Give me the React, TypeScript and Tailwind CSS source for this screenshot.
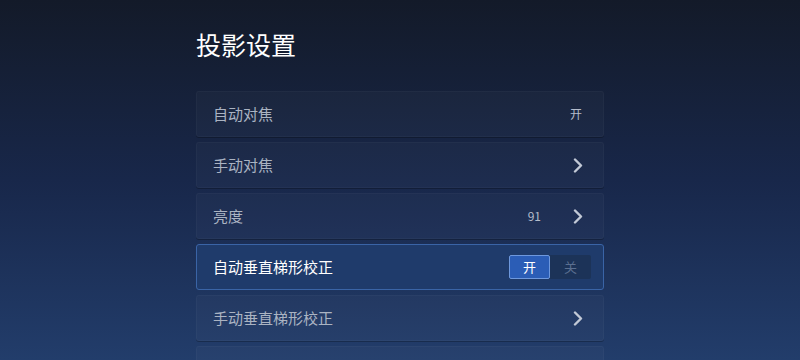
type Row = {
  label: string;
  value?: string;
  arrow?: boolean;
  toggle?: boolean;
};

const rows: Row[] = [
  { label: '自动对焦', value: '开' },
  { label: '手动对焦', arrow: true },
  { label: '亮度', value: '91', arrow: true },
  { label: '自动垂直梯形校正', toggle: true },
  { label: '手动垂直梯形校正', arrow: true },
  { label: '' },
];

const Chevron = () => (
  <svg width="10" height="15" viewBox="0 0 10 15" className="text-[#c2c9d6]">
    <polyline points="2,1.5 8,7.5 2,13.5" fill="none" stroke="currentColor" strokeWidth="2.4" strokeLinecap="round" strokeLinejoin="round" />
  </svg>
);

const App = () => {
  return (
    <div
      className="h-[360px] w-[800px] overflow-hidden bg-gradient-to-b from-[#131a29] via-[#18274a] to-[#223d6b]"
      style={{ fontFamily: '"Noto Sans CJK SC", "Noto Sans", sans-serif' }}
    >
      <div className="mx-auto w-[408px] pt-[28px]">
        <h1 className="text-[25px] leading-8 font-normal text-white">投影设置</h1>

        <div className="mt-[31px] flex flex-col gap-[5px]">
          {rows.map((row, i) =>
            row.toggle ? (
              <div
                key={i}
                className="flex h-[46px] items-center justify-between rounded-[3px] border border-[#3a64a6] bg-[#1f3b6b] pl-4 pr-[12px]"
              >
                <span className="text-[15px] text-white">{row.label}</span>
                <div className="flex items-center rounded-[2px] bg-[#1c3358]">
                  <div className="flex h-[24px] w-[41px] items-center justify-center rounded-[2px] border border-[#6e98dd] bg-[#2b5db6] text-[13px] text-white">
                    开
                  </div>
                  <div className="flex h-[22px] w-[41px] items-center justify-center text-[13px] text-[#5b6f90]">
                    关
                  </div>
                </div>
              </div>
            ) : (
              <div
                key={i}
                className="flex h-[46px] items-center justify-between rounded-[3px] border border-white/[0.03] bg-white/[0.025] pl-4 pr-[20px] shadow-[0_1px_0_rgba(0,0,0,0.25)]"
              >
                <span className="text-[15px] text-[#aab3c2]">{row.label}</span>
                <div className="flex items-center">
                  {row.value && (
                    <span className={`text-[12px] text-[#b4bccb] ${row.arrow ? 'mr-[32px]' : 'mr-[1px]'}`}>
                      {row.value}
                    </span>
                  )}
                  {row.arrow && <Chevron />}
                </div>
              </div>
            )
          )}
        </div>
      </div>
    </div>
  );
};

export default App;
